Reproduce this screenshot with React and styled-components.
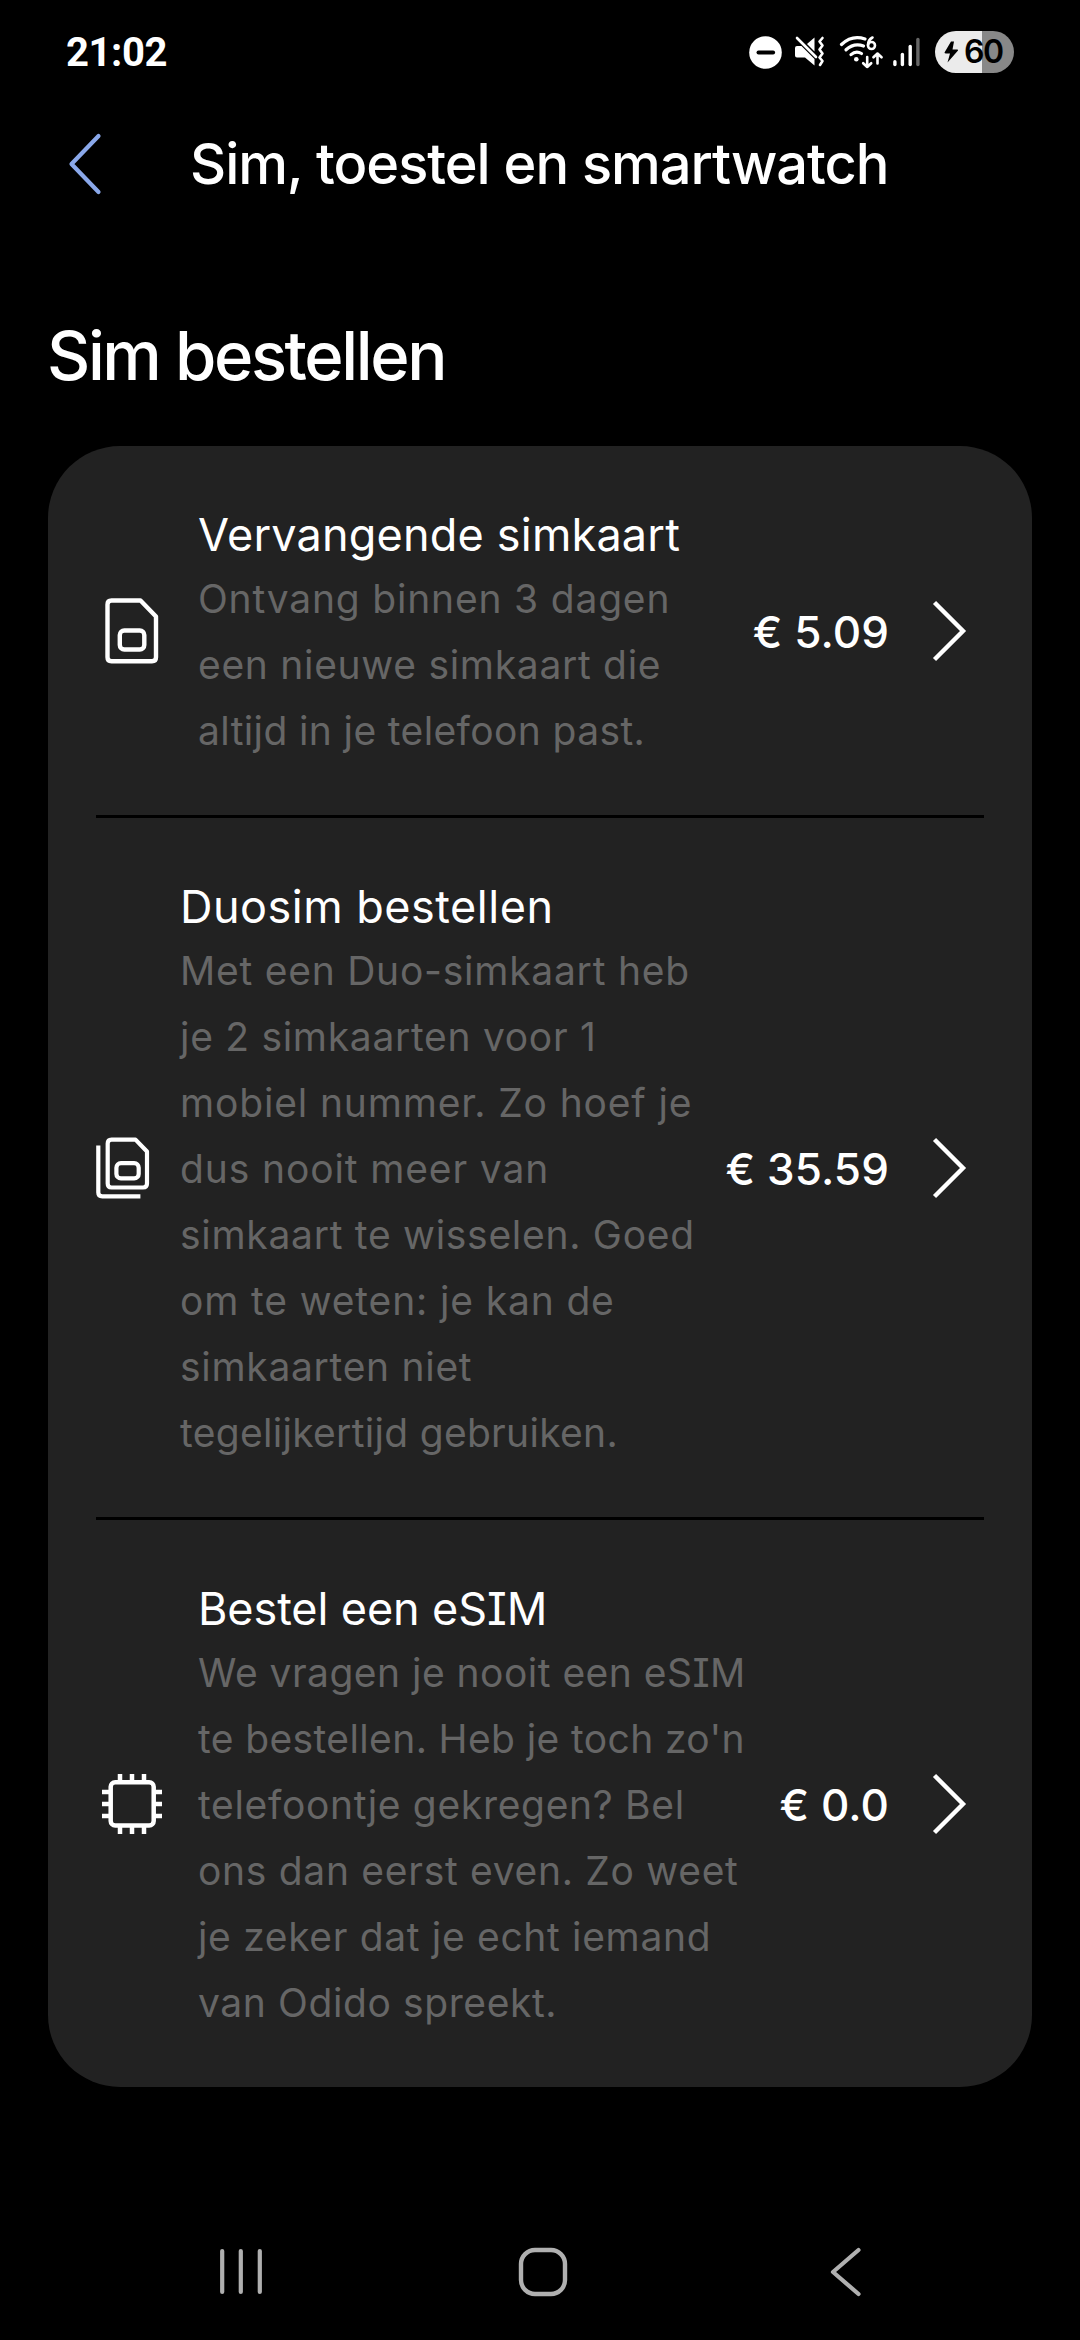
import React from "react"
import styled, { createGlobalStyle } from "styled-components"

const GlobalStyle = createGlobalStyle`
  * {
    box-sizing: border-box;
  }
  body {
    margin: 0;
    background: #000;
    color: #fff;
    font-family: Inter, "Open Sans", sans-serif;
    font-feature-settings: "cv08";
  }
  svg {
    display: block;
    flex: none;
  }
`

const Screen = styled.div`
  width: 1080px;
  height: 2340px;
  display: flex;
  flex-direction: column;
  background: #000;
`

const StatusBar = styled.div`
  height: 104px;
  padding: 0 66px;
  display: flex;
  align-items: center;
  justify-content: space-between;
`

const Clock = styled.span`
  padding-top: 1px;
  font-family: Roboto, sans-serif;
  font-weight: 700;
  font-size: 40px;
  line-height: 46px;
  letter-spacing: -0.4px;
`

const StatusIcons = styled.div`
  display: flex;
  align-items: center;
`

const StatusIcon = styled.svg`
  margin-left: ${p => p.$gap || 0}px;
`

const Battery = styled.div`
  width: 79px;
  height: 42px;
  margin-left: 15px;
  border-radius: 21px;
  background: linear-gradient(to right, #ebebeb 60%, #888 60%);
  color: #000;
  display: flex;
  align-items: center;
  padding-left: 9px;
  font: 600 32px/42px Inter, sans-serif;
  letter-spacing: -1.5px;
  gap: 5px;
`

const Header = styled.header`
  height: 120px;
  padding-left: 68px;
  display: flex;
  align-items: center;
`

const PageTitle = styled.h1`
  margin: 0 0 0 87px;
  font-weight: 500;
  font-size: 56px;
  line-height: 66px;
  letter-spacing: -1.05px;
  white-space: nowrap;
`

const SectionTitle = styled.h2`
  margin: 92px 47px 0;
  height: 130px;
  font-weight: 500;
  font-size: 67px;
  line-height: 80px;
  letter-spacing: -2.4px;
  white-space: nowrap;
`

const Card = styled.section`
  margin: 0 48px;
  padding: 0 48px;
  border-radius: 72px;
  background: #222;
`

const Row = styled.div`
  padding: 51px 0;
  display: flex;
  align-items: center;

  & + & {
    border-top: 3px solid #000;
  }
`

const RowText = styled.div`
  flex: 1;
  margin-left: 30px;
  padding-top: 7px;
  white-space: nowrap;
`

const RowTitle = styled.h3`
  margin: 0;
  font-weight: 400;
  font-size: 45px;
  line-height: 62px;
  letter-spacing: ${p => p.$spacing || 0}px;
`

const Line = styled.span`
  display: block;
  font-weight: 400;
  font-size: 39px;
  line-height: 66px;
  letter-spacing: ${p => p.$spacing || 0}px;
  color: #666;
`

const Side = styled.div`
  padding-right: 17px;
  display: flex;
  align-items: center;
`

const Price = styled.span`
  margin-right: 43px;
  padding-top: 3px;
  font-weight: 500;
  font-size: 44px;
  line-height: 60px;
  letter-spacing: 0.1px;
  white-space: nowrap;
`

const NavBar = styled.nav`
  margin-top: auto;
  height: 136px;
  padding: 0 217px 0 218px;
  display: flex;
  align-items: center;
  justify-content: space-between;
`

const HomeButton = styled.svg`
  margin-right: 7px;
`

const DoNotDisturb = () => (
  <StatusIcon width="33" height="33" viewBox="0 0 33 33">
    <circle cx="16.5" cy="16.5" r="16.3" fill="#fff" />
    <path d="M9.5 16.5h14.6" stroke="#000" strokeWidth="4" strokeLinecap="round" />
  </StatusIcon>
)

const Muted = () => (
  <StatusIcon $gap={12} width="32" height="32" viewBox="0 0 32 32">
    <path d="M13 8L20.5 1.5V15.5z" fill="#fff" />
    <path d="M3 10H7.5L20.5 23V29.5L11 21.5H3q-2 0-2-2V12q0-2 2-2z" fill="#fff" />
    <path d="M3 2L22 21" stroke="#fff" strokeWidth="2.6" strokeLinecap="round" />
    <path
      d="M28.5 2L25.5 5.5L28.5 9.5L25.5 13.5L28.5 17.5L25.5 21.5L28.5 25L26 29"
      fill="none"
      stroke="#fff"
      strokeWidth="2.6"
      strokeLinecap="round"
      strokeLinejoin="round"
    />
  </StatusIcon>
)

const Wifi = () => (
  <StatusIcon $gap={13} width="44" height="34" viewBox="0 0 44 34">
    <g fill="none" stroke="#fff" strokeWidth="3.2" strokeLinecap="round">
      <path d="M2.5 9.5Q13 -0.5 26 4" />
      <path d="M7 14.8Q15 7.5 24.5 11" />
      <path d="M12 19.6Q17 15.2 22.5 18.5" />
    </g>
    <circle cx="17.3" cy="24.3" r="2.3" fill="#fff" />
    <g fill="none" stroke="#fff" strokeWidth="2.6" strokeLinecap="round" strokeLinejoin="round">
      <path d="M33.5 2.5Q29 5 29 10" />
      <circle cx="32.5" cy="10.5" r="3.5" />
      <path d="M28.2 22V32M24.2 28.2L28.2 32L32.2 28.2" />
      <path d="M38.5 28.5V18.5M34.5 22.3L38.5 18.5L42.5 22.3" />
    </g>
  </StatusIcon>
)

const Signal = () => (
  <StatusIcon $gap={9} width="28" height="30" viewBox="0 0 28 30">
    <g stroke="#fff" strokeWidth="3.4" strokeLinecap="round">
      <path d="M2.9 24.8V27.6" />
      <path d="M10.4 17.4V27.6" />
      <path d="M18.2 9.4V27.6" />
      <path d="M25.9 2.4V27.6" stroke="#666" />
    </g>
  </StatusIcon>
)

const Bolt = () => (
  <svg width="15" height="22" viewBox="0 0 15 22">
    <path d="M7 0.5L0.5 11.5Q0.5 12.5 2 12.5H6L3.5 21.5L14 9.5Q14.5 8.5 13 8.5H8.5L10 0.5z" fill="#000" />
  </svg>
)

const BackChevron = () => (
  <svg width="35" height="62" viewBox="0 0 35 62">
    <path
      d="M30.5 3L3.5 31L30.5 59"
      fill="none"
      stroke="#8aa8ea"
      strokeWidth="4.2"
      strokeLinecap="round"
      strokeLinejoin="round"
    />
  </svg>
)

const Chevron = () => (
  <svg width="35" height="62" viewBox="0 0 35 62">
    <path d="M2.5 2.5L31 31L2.5 59.5" fill="none" stroke="#fff" strokeWidth="4.4" />
  </svg>
)

const SimIcon = () => (
  <svg width="72" height="72" viewBox="0 0 72 72" fill="none" stroke="#fff" strokeWidth="4.4">
    <path
      d="M44.5 5.5H15.5Q11.5 5.5 11.5 9.5V62.3Q11.5 66.3 15.5 66.3H56Q60 66.3 60 62.3V21.5z"
      strokeLinejoin="round"
    />
    <rect x="23.8" y="35.5" width="24.5" height="19" rx="4.5" />
  </svg>
)

const DuoSimIcon = () => (
  <svg width="54" height="62" viewBox="0 0 54 62" fill="none" stroke="#fff" strokeWidth="4.2">
    <path d="M2.3 8.5V55.5Q2.3 59.3 6.3 59.3H44.4" />
    <path
      d="M39.5 2.6H15.5Q11.7 2.6 11.7 6.6V46.5Q11.7 50.5 15.5 50.5H47Q51 50.5 51 46.5V14.5z"
      strokeLinejoin="round"
    />
    <rect x="20.4" y="26.2" width="22.3" height="15.2" rx="4.5" />
  </svg>
)

const ChipIcon = () => (
  <svg width="72" height="72" viewBox="0 0 72 72" fill="none" stroke="#fff" strokeWidth="4.5">
    <rect x="14.7" y="14.3" width="43" height="43.3" rx="4.5" />
    <path d="M24 6V14M36 6V14M48 6V14M24 58V66M36 58V66M48 58V66" />
    <path d="M6 24H14M6 36H14M6 48H14M58 24H66M58 36H66M58 48H66" />
  </svg>
)

// each line is [text, letter spacing]
const products = [
  {
    icon: SimIcon,
    title: "Vervangende simkaart",
    spacing: 0.2,
    price: "€ 5.09",
    lines: [
      ["Ontvang binnen 3 dagen", 0.8],
      ["een nieuwe simkaart die", 0.7],
      ["altijd in je telefoon past.", 0.37]
    ]
  },
  {
    icon: DuoSimIcon,
    title: "Duosim bestellen",
    spacing: 0.5,
    price: "€ 35.59",
    lines: [
      ["Met een Duo-simkaart heb", 0.75],
      ["je 2 simkaarten voor 1", 0.7],
      ["mobiel nummer. Zo hoef je", 0.84],
      ["dus nooit meer van", 0.87],
      ["simkaart te wisselen. Goed", 0.71],
      ["om te weten: je kan de", 0.85],
      ["simkaarten niet", 0.7],
      ["tegelijkertijd gebruiken.", 0.3]
    ]
  },
  {
    icon: ChipIcon,
    title: "Bestel een eSIM",
    spacing: -0.1,
    price: "€ 0.0",
    lines: [
      ["We vragen je nooit een eSIM", 0.47],
      ["te bestellen. Heb je toch zo'n", 0.38],
      ["telefoontje gekregen? Bel", 0.68],
      ["ons dan eerst even. Zo weet", 0.7],
      ["je zeker dat je echt iemand", 0.66],
      ["van Odido spreekt.", 0.6]
    ]
  }
]

const App = () => (
  <Screen>
    <GlobalStyle />
    <StatusBar>
      <Clock>21:02</Clock>
      <StatusIcons>
        <DoNotDisturb />
        <Muted />
        <Wifi />
        <Signal />
        <Battery>
          <Bolt />
          60
        </Battery>
      </StatusIcons>
    </StatusBar>
    <Header>
      <BackChevron />
      <PageTitle>Sim, toestel en smartwatch</PageTitle>
    </Header>
    <SectionTitle>Sim bestellen</SectionTitle>
    <Card>
      {products.map(({ icon: Icon, title, spacing, price, lines }) => (
        <Row key={title}>
          <Icon />
          <RowText>
            <RowTitle $spacing={spacing}>{title}</RowTitle>
            {lines.map(([text, lineSpacing]) => (
              <Line key={text} $spacing={lineSpacing}>
                {text}
              </Line>
            ))}
          </RowText>
          <Side>
            <Price>{price}</Price>
            <Chevron />
          </Side>
        </Row>
      ))}
    </Card>
    <NavBar>
      <svg width="46" height="50" viewBox="0 0 46 50" stroke="#b0b0b0" strokeWidth="4.2" strokeLinecap="round">
        <path d="M4.2 4V45M22.8 4V45M41.8 4V45" />
      </svg>
      <HomeButton width="50" height="50" viewBox="0 0 50 50" fill="none" stroke="#b0b0b0" strokeWidth="4.4">
        <rect x="3" y="3" width="44" height="44" rx="14" />
      </HomeButton>
      <svg width="34" height="50" viewBox="0 0 34 50" fill="none" stroke="#b0b0b0" strokeWidth="4.2">
        <path d="M29.5 3L4 25L29.5 47" strokeLinecap="round" strokeLinejoin="round" />
      </svg>
    </NavBar>
  </Screen>
)

export default App
